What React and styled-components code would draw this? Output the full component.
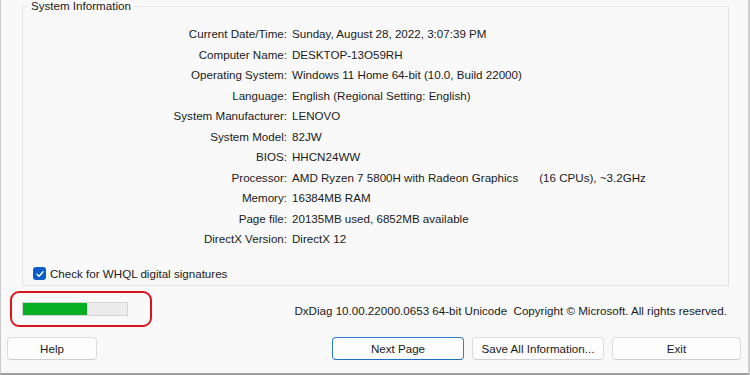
import React from 'react'
import styled, { createGlobalStyle } from 'styled-components'

const GlobalStyle = createGlobalStyle`
  html, body {
    margin: 0;
    padding: 0;
    background: #f9f9f9;
  }
  body {
    font-family: Tahoma, "Liberation Sans", "DejaVu Sans", sans-serif;
    font-size: 11.6px;
    color: #1a1a1a;
  }
`

const rows = [
  ['Current Date/Time:', 'Sunday, August 28, 2022, 3:07:39 PM'],
  ['Computer Name:', 'DESKTOP-13O59RH'],
  ['Operating System:', 'Windows 11 Home 64-bit (10.0, Build 22000)'],
  ['Language:', 'English (Regional Setting: English)'],
  ['System Manufacturer:', 'LENOVO'],
  ['System Model:', '82JW'],
  ['BIOS:', 'HHCN24WW'],
  ['Processor:', 'AMD Ryzen 7 5800H with Radeon Graphics', '(16 CPUs), ~3.2GHz'],
  ['Memory:', '16384MB RAM'],
  ['Page file:', '20135MB used, 6852MB available'],
  ['DirectX Version:', 'DirectX 12'],
]

const App = () => {
  return (
    <>
      <GlobalStyle />
      <Window>
        <GroupBox>
          <Legend>System Information</Legend>
          <InfoGrid>
            {rows.map(([label, value, extra]) => (
              <React.Fragment key={label}>
                <Label>{label}</Label>
                <Value>
                  {value}
                  {extra && <Extra>{extra}</Extra>}
                </Value>
              </React.Fragment>
            ))}
          </InfoGrid>
          <CheckRow>
            <CheckBox>
              <svg width="10" height="10" viewBox="0 0 10 10">
                <path d="M2 5.2 L4.1 7.2 L8 2.8" fill="none" stroke="#fff" strokeWidth="1.4" strokeLinecap="round" strokeLinejoin="round" />
              </svg>
            </CheckBox>
            Check for WHQL digital signatures
          </CheckRow>
        </GroupBox>
        <StatusRow>
          <Highlight>
            <Progress>
              <ProgressFill style={{ width: '62%' }} />
            </Progress>
          </Highlight>
          <Copyright>DxDiag 10.00.22000.0653 64-bit Unicode&nbsp; Copyright © Microsoft. All rights reserved.</Copyright>
        </StatusRow>
        <ButtonRow>
          <Button $width={90}>Help</Button>
          <Spacer />
          <Button $width={132} $primary>Next Page</Button>
          <Button $width={132}>Save All Information...</Button>
          <Button $width={129}>Exit</Button>
        </ButtonRow>
      </Window>
    </>
  )
}

export default App

const Window = styled.div`
  box-sizing: border-box;
  width: 750px;
  height: 375px;
  border-left: 1px solid #c9c9c9;
  border-right: 2px solid #cfcfcf;
  border-bottom: 2px solid #9e9e9e;
  display: flex;
  flex-direction: column;
  overflow: hidden;
`

const GroupBox = styled.fieldset`
  box-sizing: border-box;
  margin: 0 19px 0 21px;
  padding: 0;
  height: 287px;
  border: 1px solid #e3e3e3;
  border-top-color: #e8e8e8;
  position: relative;
  top: -1px;
`

const Legend = styled.legend`
  margin-left: 5px;
  padding: 0 3px;
  line-height: 14px;
  color: #1a1a1a;
`

const InfoGrid = styled.div`
  display: grid;
  grid-template-columns: 264px 1fr;
  column-gap: 5px;
  grid-auto-rows: 20.5px;
  margin-top: 11px;
`

const Label = styled.div`
  text-align: right;
  line-height: 20.5px;
  white-space: nowrap;
`

const Value = styled.div`
  line-height: 20.5px;
  white-space: nowrap;
`

const Extra = styled.span`
  margin-left: 21px;
`

const CheckRow = styled.div`
  display: flex;
  align-items: center;
  gap: 4px;
  margin: 17px 0 0 10px;
  line-height: 14px;
`

const CheckBox = styled.span`
  box-sizing: border-box;
  width: 13px;
  height: 13px;
  border-radius: 3px;
  background: #0a5cc7;
  display: inline-flex;
  align-items: center;
  justify-content: center;
`

const StatusRow = styled.div`
  display: flex;
  align-items: center;
  justify-content: space-between;
  padding: 4px 21px 0 9px;
`

const Highlight = styled.div`
  box-sizing: border-box;
  width: 142px;
  height: 36px;
  border: 2.5px solid #d8141c;
  border-radius: 9px;
  display: flex;
  align-items: center;
  padding-left: 10px;
`

const Progress = styled.div`
  box-sizing: border-box;
  width: 106px;
  height: 14px;
  background: #ececec;
  border: 1px solid #d4d4d4;
  display: flex;
`

const ProgressFill = styled.div`
  background: #06b025;
  height: 100%;
`

const Copyright = styled.div`
  white-space: nowrap;
  color: #1a1a1a;
  padding-top: 2px;
`

const ButtonRow = styled.div`
  display: flex;
  align-items: center;
  gap: 8px;
  padding: 10px 0 0 6px;
`

const Spacer = styled.div`
  flex: 1;
`

const Button = styled.button`
  box-sizing: border-box;
  width: ${(p) => p.$width}px;
  height: 23px;
  font-family: inherit;
  font-size: 11.6px;
  color: #1a1a1a;
  background: #fdfdfd;
  border: 1px solid ${(p) => (p.$primary ? '#2f7fcf' : '#dcdcdc')};
  border-bottom-color: ${(p) => (p.$primary ? '#1f6fbf' : '#cfcfcf')};
  border-radius: 4px;
  padding: 0;
  &:last-child {
    margin-right: 7px;
  }
`
